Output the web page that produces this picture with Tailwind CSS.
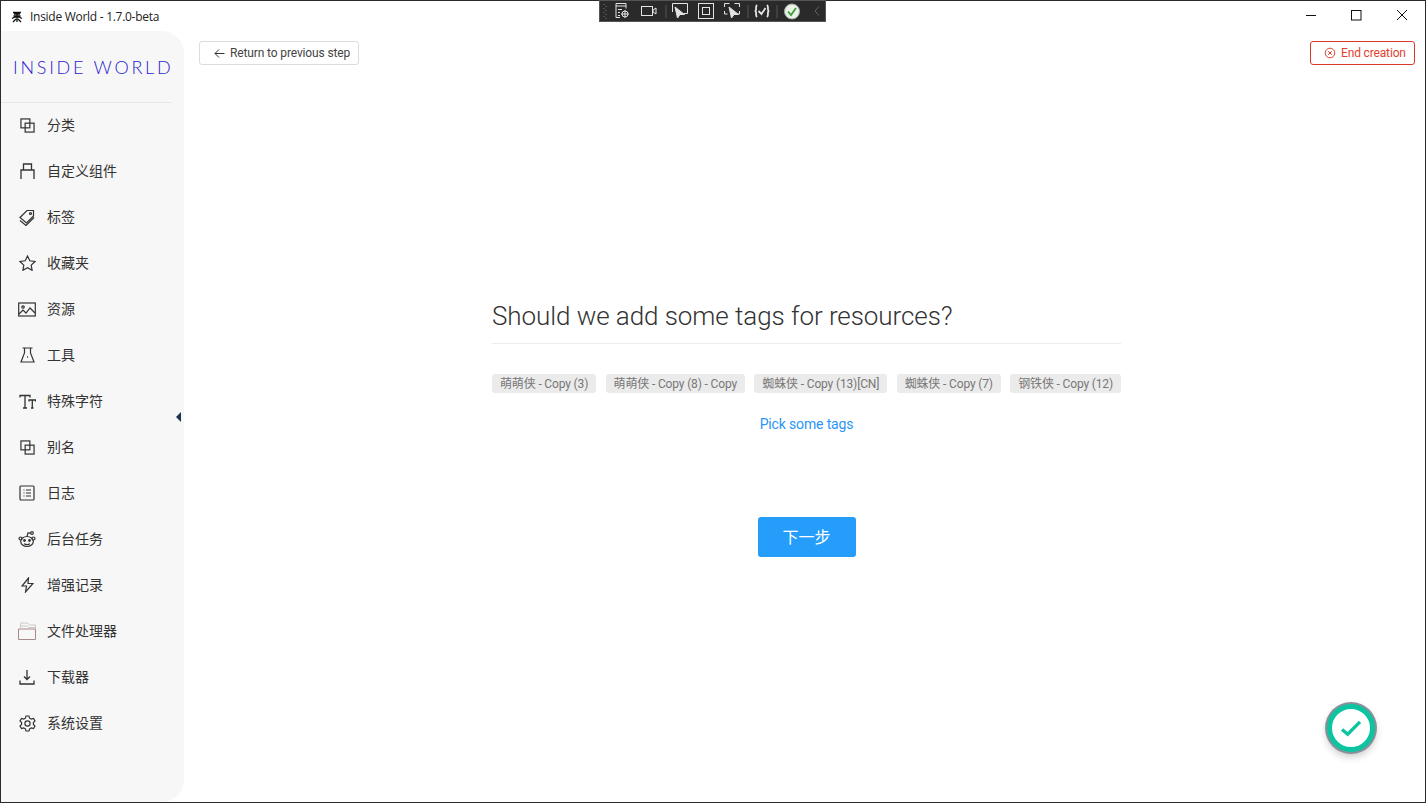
<!DOCTYPE html>
<html lang="en">
<head>
    <meta charset="UTF-8">
    <meta name="viewport" content="width=device-width, initial-scale=1.0">
    <title>Inside World</title>
    <script src="https://cdn.jsdelivr.net/npm/@tailwindcss/browser@4"></script>
</head>
<body class="bg-white overflow-hidden font-['Roboto','Noto_Sans_CJK_SC',sans-serif]">
<div class="relative w-[1426px] h-[803px] flex flex-col border border-[#2b2b2b] bg-white">

    <!-- title bar -->
    <div class="h-[30px] pt-px flex items-center shrink-0 text-black">
        <svg class="ml-[10px] w-3 h-3" viewBox="0 0 12 12" fill="none" stroke="#111" stroke-width="1.3">
            <path d="M2 1.5h8M6 1v10M2.5 5h7M1 7.5l3-1.5 4 0 3 1.5M2 11l3-3M10 11l-3-3M3 3h6"/>
        </svg>
        <span class="ml-[7px] text-[12px] tracking-[-0.28px] font-['Open_Sans'] text-[#222]">Inside World - 1.7.0-beta</span>
        <div class="ml-auto flex items-center">
            <svg class="w-[46px] h-[29px]" viewBox="0 0 46 29" fill="none" stroke="#111"><path d="M17 13.500h10"/></svg>
            <svg class="w-[46px] h-[29px]" viewBox="0 0 46 29" fill="none" stroke="#111"><rect x="16.500" y="8.500" width="9.500" height="9.500"/></svg>
            <svg class="w-[46px] h-[29px] mr-[-2px]" viewBox="0 0 46 29" fill="none" stroke="#111"><path d="M16 8l10 10M26 8L16 18"/></svg>
        </div>
    </div>

    <!-- debug toolbar -->
    <div class="absolute left-[598px] top-[-1px] w-[227px] h-[22px] bg-[#2a2a2a] border border-[#555] flex items-center">
        <svg width="225" height="20" viewBox="0 0 225 20" fill="none" stroke="#e4e4e4" stroke-width="1">
            <path d="M4 3v1M6 5v1M4 7v1M6 9v1M4 11v1M6 13v1M4 15v1M6 17v1" stroke="#777"/>
            <path d="M16 2.500h10v5M16 2.500v14h4M16 5h10M18 8.500h4M18 11.500h2M18 14.500h2"/>
            <circle cx="25" cy="13" r="3"/><path d="M25 9v8M21 13h8"/>
            <rect x="41.500" y="5.500" width="11" height="9"/><path d="M53 9l3-2v6l-3-2z"/>
            <path d="M66 4v13" stroke="#555"/>
            <path d="M72.500 7V2.500h15v10H84M72.500 7v4"/><path d="M75 6l2.500 11 2.500-3.500 4.500 0z" fill="#e4e4e4"/>
            <rect x="98.500" y="2.500" width="15" height="15"/><rect x="102.500" y="6.500" width="7" height="7"/>
            <path d="M124.500 6V2.500h5M134.500 2.500h5V6M124.500 10v3h3M139.500 10v3h-2"/><path d="M129 6l2.500 11 2.500-3.500 4.500 0z" fill="#e4e4e4"/>
            <path d="M148 4v13" stroke="#555"/>
            <path d="M157 4c-2 2 0 3.500-1.500 6 1.500 2.500-.500 4 1.500 6M167 4c2 2 0 3.500 1.500 6-1.500 2.500.500 4-1.500 6" stroke-width="1.800"/>
            <path d="M158.500 10l3 3 4-6" stroke-width="1.800"/>
            <path d="M177 4v13" stroke="#555"/>
            <circle cx="192" cy="10.500" r="7.500" fill="#e8f3e6" stroke="#aaa" stroke-width="1"/>
            <path d="M188 10.500l3 3.500 5-7" stroke="#3f9d37" stroke-width="1.800"/>
            <path d="M219 5.500l-4 4.500 4 4.500" stroke="#666"/>
        </svg>
    </div>

    <div class="flex flex-1 min-h-0">
        <!-- sidebar -->
        <aside class="relative w-[183px] shrink-0 bg-[#f7f7f7] rounded-r-[22px] text-[#333]">
            <div class="h-[72px] w-[171px] border-b border-[#e8e8e8] flex items-center pl-[12px]">
                <span class="text-[18px] leading-none tracking-[2.75px] font-light font-['Lato'] text-[#2c1bd0] whitespace-nowrap">INSIDE WORLD</span>
            </div>
            <nav class="text-[14px] -mt-px">
                <a class="h-[46px] flex items-center pl-[16px] gap-[10px]">
                    <span class="w-[20px] flex justify-center"><svg class="w-[15px] h-[15px]" viewBox="0 0 16 16" fill="none" stroke="#333" stroke-width="1.300"><rect x="1" y="1" width="9.500" height="9.500"/><rect x="5.500" y="5.500" width="9.500" height="9.500"/></svg></span>
                    <span>分类</span>
                </a>
                <a class="h-[46px] flex items-center pl-[16px] gap-[10px]">
                    <span class="w-[20px] flex justify-center"><svg class="w-[15px] h-[16px]" viewBox="0 0 15 16" fill="none" stroke="#333" stroke-width="1.300"><path d="M1 16V7h13v9M3.500 7V1h8v6"/></svg></span>
                    <span>自定义组件</span>
                </a>
                <a class="h-[46px] flex items-center pl-[16px] gap-[10px]">
                    <span class="w-[20px] flex justify-center"><svg class="w-[16px] h-[17px]" viewBox="0 0 16 17" fill="none" stroke="#333" stroke-width="1.200"><path d="M1 8.500L8 1.500h6.500V7l-7 7z"/><circle cx="11.500" cy="4.500" r="1"/><path d="M1 11.500l6 5 8-8"/></svg></span>
                    <span>标签</span>
                </a>
                <a class="h-[46px] flex items-center pl-[16px] gap-[10px]">
                    <span class="w-[20px] flex justify-center"><svg class="w-[17px] h-[16px]" viewBox="0 0 17 16" fill="none" stroke="#333" stroke-width="1.200"><path d="M8.500 1l2.300 4.800 5.200.7-3.800 3.600.9 5.200-4.600-2.500-4.600 2.500.9-5.200L1 6.500l5.200-.7z"/></svg></span>
                    <span>收藏夹</span>
                </a>
                <a class="h-[46px] flex items-center pl-[16px] gap-[10px]">
                    <span class="w-[20px] flex justify-center"><svg class="w-[18px] h-[15px]" viewBox="0 0 18 15" fill="none" stroke="#333" stroke-width="1.200"><rect x=".7" y="1" width="16.600" height="13"/><circle cx="5" cy="5" r="1.200"/><path d="M1 12l4-4 3 3 4-5 5 5"/></svg></span>
                    <span>资源</span>
                </a>
                <a class="h-[46px] flex items-center pl-[16px] gap-[10px]">
                    <span class="w-[20px] flex justify-center"><svg class="w-[15px] h-[16px]" viewBox="0 0 15 16" fill="none" stroke="#333" stroke-width="1.200"><path d="M2.500 1h10M4.500 1v5L1 15h13l-3.500-9V1"/><path d="M7 10h1" stroke-width="1.500"/></svg></span>
                    <span>工具</span>
                </a>
                <a class="h-[46px] flex items-center pl-[16px] gap-[10px]">
                    <span class="w-[20px] flex justify-center"><svg class="w-[17px] h-[15px]" viewBox="0 0 17 15" fill="none" stroke="#333" stroke-width="1.300"><path d="M1 3.500V1.500h10v2M6 1.500V14M4 14h4M10 7.500V6h6.500v1.500M13.300 6v8M12 14h2.500"/></svg></span>
                    <span>特殊字符</span>
                </a>
                <a class="h-[46px] flex items-center pl-[16px] gap-[10px]">
                    <span class="w-[20px] flex justify-center"><svg class="w-[15px] h-[15px]" viewBox="0 0 16 16" fill="none" stroke="#333" stroke-width="1.300"><rect x="1" y="1" width="9.500" height="9.500"/><rect x="5.500" y="5.500" width="9.500" height="9.500"/></svg></span>
                    <span>别名</span>
                </a>
                <a class="h-[46px] flex items-center pl-[16px] gap-[10px]">
                    <span class="w-[20px] flex justify-center"><svg class="w-[16px] h-[16px]" viewBox="0 0 16 16" fill="none" stroke="#333" stroke-width="1.200"><rect x="1" y="1" width="14" height="14" rx="1"/><path d="M4.500 5h1M7 5h5M4.500 8h1M7 8h5M4.500 11h1M7 11h5"/></svg></span>
                    <span>日志</span>
                </a>
                <a class="h-[46px] flex items-center pl-[16px] gap-[10px]">
                    <span class="w-[20px] flex justify-center"><svg class="w-[18px] h-[17px]" viewBox="0 0 18 17" fill="none" stroke="#333" stroke-width="1.200"><ellipse cx="9" cy="10.500" rx="6.300" ry="5"/><circle cx="2.500" cy="7.500" r="1.500"/><circle cx="15.500" cy="7.500" r="1.500"/><circle cx="14" cy="2" r="1.300"/><path d="M9 5.500L10 1.800l2.700.4M6 12.800c2 1.200 4 1.200 6 0"/><circle cx="6.500" cy="9.500" r=".8" fill="#333"/><circle cx="11.500" cy="9.500" r=".8" fill="#333"/></svg></span>
                    <span>后台任务</span>
                </a>
                <a class="h-[46px] flex items-center pl-[16px] gap-[10px]">
                    <span class="w-[20px] flex justify-center"><svg class="w-[13px] h-[16px]" viewBox="0 0 13 16" fill="none" stroke="#333" stroke-width="1.200"><path d="M7.500 1L1 9h4.500L4.500 15 12 6.500H7z"/></svg></span>
                    <span>增强记录</span>
                </a>
                <a class="h-[46px] flex items-center pl-[16px] gap-[10px]">
                    <span class="w-[20px] flex justify-center"><svg class="w-[18px] h-[18px]" viewBox="0 0 18 18" fill="none" stroke-width="1"><path d="M.5 17.500V7h17v10.500z" stroke="#a98a8a"/><path d="M2.500 7V1h7l2 2h6v4" stroke="#c9c9c9"/><path d="M3 4h6l2 1.500h6" stroke="#ccc"/></svg></span>
                    <span>文件处理器</span>
                </a>
                <a class="h-[46px] flex items-center pl-[16px] gap-[10px]">
                    <span class="w-[20px] flex justify-center"><svg class="w-[16px] h-[16px]" viewBox="0 0 16 16" fill="none" stroke="#333" stroke-width="1.300"><path d="M8 1v9M5 7.500L8 10.500l3-3M1 11.500V15h14v-3.500"/></svg></span>
                    <span>下载器</span>
                </a>
                <a class="h-[46px] flex items-center pl-[16px] gap-[10px]">
                    <span class="w-[20px] flex justify-center"><svg class="w-[17px] h-[17px]" viewBox="0 0 17 17" fill="none" stroke="#333" stroke-width="1.200"><path d="M7 1h3l.6 2.200 1.700.9 2.200-.7 1.500 2.600-1.600 1.600v1.800l1.600 1.600-1.500 2.600-2.200-.7-1.700.9L10 16H7l-.6-2.200-1.700-.9-2.200.7L1 11l1.600-1.600V7.600L1 6l1.500-2.600 2.200.7 1.700-.9z"/><circle cx="8.500" cy="8.500" r="2.600"/></svg></span>
                    <span>系统设置</span>
                </a>
            </nav>
            <div class="absolute right-[3px] top-[381px] w-0 h-0 border-y-[5px] border-y-transparent border-r-[5px] border-r-[#1c3150]"></div>
        </aside>

        <!-- main content -->
        <main class="flex-1 flex flex-col min-w-0">
            <div class="flex justify-between items-start pt-[10px] pl-[15px] pr-[10px]">
                <button class="h-[24px] w-[160px] flex items-center pl-[14px] gap-[5px] border border-[#dcdcdc] rounded-[3px] text-[12px] tracking-[-0.13px] text-[#444]">
                    <svg class="w-[11px] h-[11px]" viewBox="0 0 11 11" fill="none" stroke="#333"><path d="M10.500 5.500H1M5 1.500l-4 4 4 4"/></svg>
                    Return to previous step
                </button>
                <button class="h-[24px] w-[105px] flex items-center pl-[13px] gap-[5px] border border-[#d9392b] rounded-[3px] text-[12px] tracking-[-0.15px] text-[#e2412f]">
                    <svg class="w-[12px] h-[12px]" viewBox="0 0 12 12" fill="none" stroke="#e2412f"><circle cx="6" cy="6" r="4.800"/><path d="M4.200 4.200l3.600 3.600M7.800 4.200L4.200 7.800"/></svg>
                    End creation
                </button>
            </div>
            <section class="w-[629px] ml-[308px] mt-[230px] flex flex-col">
                <h1 class="h-[49px] border-b border-[#ececec] text-[26px] tracking-[-0.07px] leading-[42px] font-light text-[#333] whitespace-nowrap">Should we add some tags for resources?</h1>
                <div class="flex justify-between mt-[30px] text-[12px] tracking-[-0.15px] text-[#777] whitespace-nowrap">
                    <span class="h-[19px] leading-[21px] px-2 bg-[#ebebeb] rounded-[3px]">萌萌侠 - Copy (3)</span>
                    <span class="h-[19px] leading-[21px] px-2 bg-[#ebebeb] rounded-[3px]">萌萌侠 - Copy (8) - Copy</span>
                    <span class="h-[19px] leading-[21px] px-2 bg-[#ebebeb] rounded-[3px]">蜘蛛侠 - Copy (13)[CN]</span>
                    <span class="h-[19px] leading-[21px] px-2 bg-[#ebebeb] rounded-[3px]">蜘蛛侠 - Copy (7)</span>
                    <span class="h-[19px] leading-[21px] px-2 bg-[#ebebeb] rounded-[3px]">钢铁侠 - Copy (12)</span>
                </div>
                <a class="mt-[21px] text-center text-[14px] tracking-[-0.15px] leading-[20px] text-[#2b95f5]">Pick some tags</a>
                <button class="mt-[83px] mx-auto w-[98px] h-[40px] pt-px bg-[#259dfb] rounded-[3px] text-white text-[16px]">下一步</button>
            </section>
        </main>
    </div>

    <!-- floating check button -->
    <div class="absolute left-[1326px] top-[703px] w-[48px] h-[48px] rounded-full bg-white border-[5px] border-[#0cc5a0] shadow-[0_0_0_2px_#8a8f9a,0_4px_8px_rgba(0,0,0,0.25)] flex items-center justify-center">
        <svg class="w-[22px] h-[17px]" viewBox="0 0 23 18" fill="none" stroke="#0cc5a0" stroke-width="3.500"><path d="M2 10l6 5L21 2"/></svg>
    </div>
</div>
</body>
</html>
